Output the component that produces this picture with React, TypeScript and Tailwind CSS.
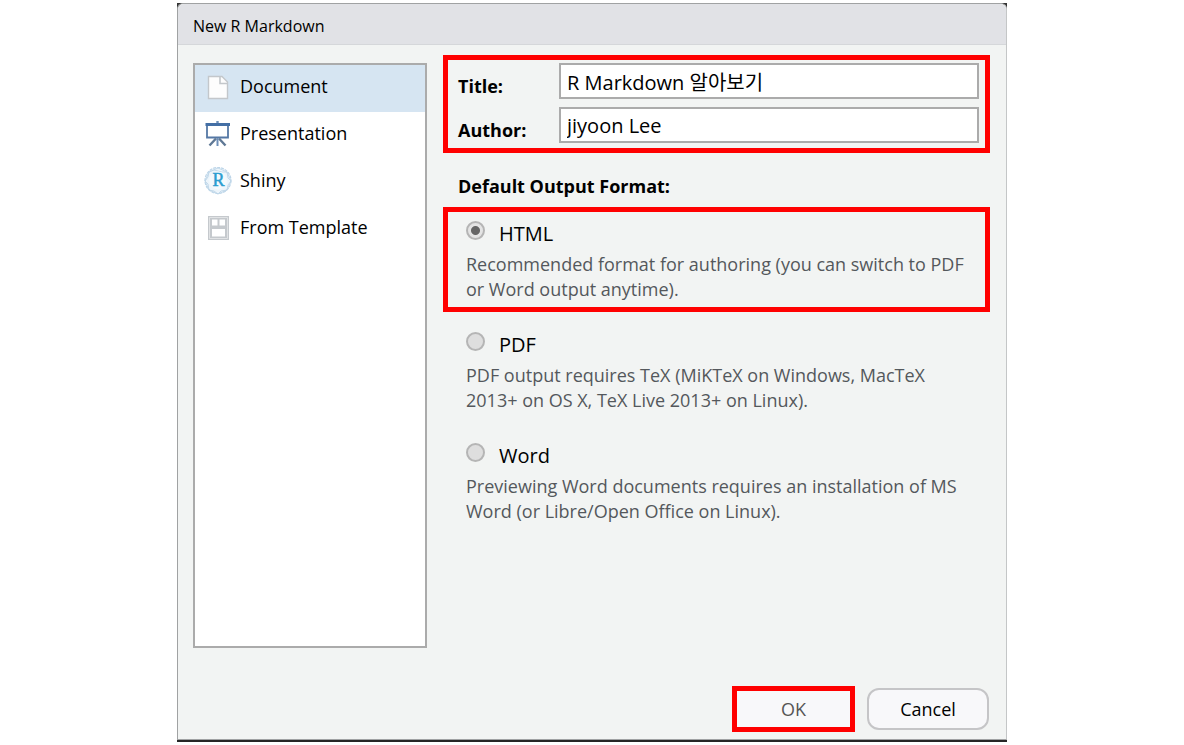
import { useState } from "react";
import type { ReactNode } from "react";

function DocumentIcon() {
  return (
    <svg width="28" height="28" viewBox="0 0 28 28" fill="none" aria-hidden="true">
      <path d="M4.5 3.5H18L23.5 9V25.5H4.5Z" fill="#fdfdfd" stroke="#c3c7cb" strokeWidth="1.4" />
      <path d="M16 4V10.5H23" stroke="#c3c7cb" strokeWidth="1.6" />
    </svg>
  );
}

function PresentationIcon() {
  return (
    <svg width="28" height="28" viewBox="0 0 28 28" fill="none" aria-hidden="true">
      <path d="M13.5 1V4" stroke="#6d8fb8" strokeWidth="2.4" />
      <path d="M3 5V17.5H24V5" fill="#fff" stroke="#5578a5" strokeWidth="1.8" />
      <path d="M1.5 4.5H26" stroke="#446fa5" strokeWidth="3" />
      <path d="M13.5 18V26" stroke="#6d8fb8" strokeWidth="2" />
      <path d="M12 18.5L5.5 25.5M15 18.5L21.5 25.5" stroke="#5f7895" strokeWidth="2.4" />
    </svg>
  );
}

function ShinyIcon() {
  return (
    <svg width="28" height="28" viewBox="0 0 28 28" fill="none" aria-hidden="true">
      <circle cx="14" cy="13.5" r="13" fill="#edf5fb" stroke="#bdd5e8" strokeWidth="1.2" strokeDasharray="3 1" />
      <path
        d="M5 5L14 1L23 5L27 14L23 23L14 27L5 23L1 14ZM5 5L10 3L18 5L23 5L24 11L27 14L24 18L23 23L17 24L14 27L10 24L5 23L4 17L1 14L4 10Z"
        stroke="#bfd7e9"
        strokeWidth="0.9"
      />
      <circle cx="14" cy="13.5" r="9" fill="#f4f9fd" />
      <text x="14.5" y="19" textAnchor="middle" fontSize="18" stroke="#2b9dd0" strokeWidth="0.5" fill="#2b9dd0" className="font-['Liberation_Serif',serif]">
        R
      </text>
    </svg>
  );
}

function TemplateIcon() {
  return (
    <svg width="28" height="28" viewBox="0 0 28 28" fill="none" aria-hidden="true">
      <rect x="4" y="2" width="21" height="24" fill="#c5c9cd" />
      <path d="M8 5.5H13.5V11.5H8ZM15.5 5.5H21V11.5H15.5ZM8 15H21V22.5H8Z" fill="#fff" />
      <path d="M5.5 3.5H23.5V24.5H5.5Z" stroke="#eceeef" strokeWidth="0.7" />
    </svg>
  );
}

const kinds: { name: string; icon: ReactNode }[] = [
  { name: "Document", icon: <DocumentIcon /> },
  { name: "Presentation", icon: <PresentationIcon /> },
  { name: "Shiny", icon: <ShinyIcon /> },
  { name: "From Template", icon: <TemplateIcon /> },
];

const formats = [
  {
    id: "HTML",
    text: "Recommended format for authoring (you can switch to PDF or Word output anytime).",
    frame: "border-[#ff0000]",
  },
  {
    id: "PDF",
    text: "PDF output requires TeX (MiKTeX on Windows, MacTeX 2013+ on OS X, TeX Live 2013+ on Linux).",
    frame: "border-transparent",
  },
  {
    id: "Word",
    text: "Previewing Word documents requires an installation of MS Word (or Libre/Open Office on Linux).",
    frame: "border-transparent",
  },
];

function Field({ id, label, value, onChange }: { id: string; label: string; value: string; onChange: (v: string) => void }) {
  return (
    <div className="flex items-center">
      <label htmlFor={id} className="w-[101px] shrink-0 pt-[10px] text-[18px] leading-6 font-bold">
        {label}
      </label>
      <input
        id={id}
        type="text"
        value={value}
        onChange={(e) => onChange(e.target.value)}
        className="h-9 min-w-0 flex-1 border-2 border-[#ababab] bg-white px-1.5 text-[20px] outline-none"
      />
    </div>
  );
}

export default function App() {
  const [kind, setKind] = useState("Document");
  const [format, setFormat] = useState("HTML");
  const [title, setTitle] = useState("R Markdown 알아보기");
  const [author, setAuthor] = useState("jiyoon Lee");

  return (
    <main className="min-h-screen bg-white pt-[3px] font-['Open_Sans','Noto_Sans_CJK_KR',sans-serif] text-black">
      <div role="dialog" aria-labelledby="dialog-title" className="mx-auto max-w-[830px] border-b-2 border-[#262626] bg-[#333333]">
        <div className="rounded-t-md border border-[#a0a2a3] border-r-[#c4c6c7] bg-[#f2f4f3]">
          <header className="rounded-t-md border-b border-[#d5d7da] bg-[#e1e2e6] px-[15px] pt-[10px] pb-[6px]">
            <h1 id="dialog-title" className="text-[16px] leading-6">
              New R Markdown
            </h1>
          </header>

          <div className="flex gap-4 pt-[10px] pr-4 pl-[15px]">
            <ul className="mt-2 min-h-[585px] w-[234px] shrink-0 border-2 border-[#ababab] bg-white">
              {kinds.map((k) => (
                <li key={k.name}>
                  <button
                    type="button"
                    onClick={() => setKind(k.name)}
                    aria-pressed={kind === k.name}
                    className={`flex h-[47px] w-full items-center gap-2 pb-1 pl-[9px] text-left text-[18px] ${kind === k.name ? "bg-[#d6e5f2]" : "bg-white"}`}
                  >
                    {k.icon}
                    {k.name}
                  </button>
                </li>
              ))}
            </ul>

            <div className="min-w-0 flex-1">
              <div className="flex flex-col gap-2 border-[5px] border-[#ff0000] pt-[3px] pr-[6px] pb-[5px] pl-[10px]">
                <Field id="title" label="Title:" value={title} onChange={setTitle} />
                <Field id="author" label="Author:" value={author} onChange={setAuthor} />
              </div>

              <fieldset>
                <legend className="pt-[21px] pb-[9px] pl-[15px] text-[18px] leading-6 font-bold">Default Output Format:</legend>
                <div className="flex flex-col gap-[6px]">
                  {formats.map((f) => (
                    <div key={f.id} className={`border-[5px] pt-[9px] pr-4 pb-[5px] pl-[18px] ${f.frame}`}>
                      <div className="flex items-start gap-[14px]">
                        <input
                          id={f.id}
                          type="radio"
                          name="format"
                          checked={format === f.id}
                          onChange={() => setFormat(f.id)}
                          className="size-[19px] shrink-0 appearance-none rounded-full border-2 border-[#b5b5b5] bg-[#dedede] checked:bg-[radial-gradient(circle,#666_0_4px,#e4e4e4_5px)]"
                        />
                        <label htmlFor={f.id} className="pt-px text-[20px] leading-6">
                          {f.id}
                        </label>
                      </div>
                      <p className="pt-[6px] text-[18px] leading-[25px] text-[#54585c]">{f.text}</p>
                    </div>
                  ))}
                </div>
              </fieldset>
            </div>
          </div>

          <footer className="flex items-center justify-end gap-3 pt-[38px] pr-[17px] pb-[7px]">
            <button type="button" className="h-[46px] w-[123px] border-[5px] border-[#ff0000] bg-[#f8f8fa] text-[18px] text-[#555]">
              OK
            </button>
            <button type="button" className="h-[42px] w-[122px] rounded-xl border-2 border-[#c5c5c7] bg-[#f8f8fa] text-[18px]">
              Cancel
            </button>
          </footer>
        </div>
      </div>
    </main>
  );
}
